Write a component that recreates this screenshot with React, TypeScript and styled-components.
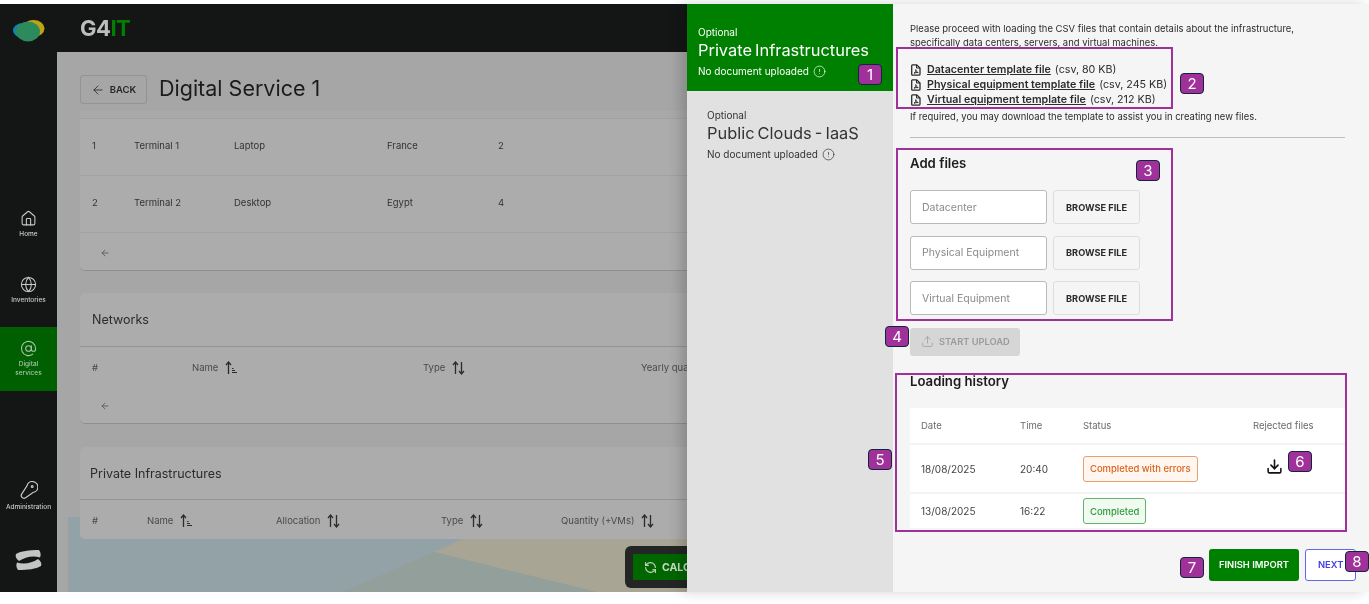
import React from "react"
import styled, { createGlobalStyle } from "styled-components"
import { ArrowLeft, AtSign, CircleAlert, Download, Globe, Home, RefreshCcw, Upload } from "lucide-react"

const uiFont = `"Inter", "Noto Sans", "Liberation Sans", sans-serif`
const purple = "#a0309a"

const GlobalStyle = createGlobalStyle`
    html, body {
        margin: 0;
        padding: 0;
        background: #ffffff;
    }
    * {
        box-sizing: border-box;
    }
`

const terminals = [
    { id: 1, name: "Terminal 1", type: "Laptop", country: "France", quantity: 2 },
    { id: 2, name: "Terminal 2", type: "Desktop", country: "Egypt", quantity: 4 },
]

const uploads = [
    { date: "18/08/2025", time: "20:40", status: "Completed with errors", warn: true },
    { date: "13/08/2025", time: "16:22", status: "Completed", warn: false },
]

const templates = [
    { label: "Datacenter template file", meta: "(csv, 80 KB)" },
    { label: "Physical equipment template file", meta: "(csv, 245 KB)" },
    { label: "Virtual equipment template file", meta: "(csv, 212 KB)" },
]

const badges = [
    { n: 1, x: 858, y: 64 },
    { n: 2, x: 1180, y: 73 },
    { n: 3, x: 1136, y: 160 },
    { n: 4, x: 885, y: 326 },
    { n: 5, x: 868, y: 449 },
    { n: 6, x: 1288, y: 451 },
    { n: 7, x: 1180, y: 557 },
    { n: 8, x: 1345, y: 551 },
]

const boxes = [
    { x: 896, y: 47, w: 277, h: 62 },
    { x: 896, y: 148, w: 277, h: 173 },
    { x: 895, y: 373, w: 452, h: 159 },
]

function SortIcon({ sorted }: { sorted?: boolean }) {
    return (
        <svg width="13" height="14" viewBox="0 0 13 14" fill="none" stroke="#2c2c2c" strokeWidth="1.3">
            <path d="M3.5 13V1.5M1 4l2.5-3L6 4" />
            {sorted ? (
                <path d="M7 7.5h1.5M7 9.5h3M7 11.5h5" strokeWidth="1" />
            ) : (
                <path d="M9.5 1v11.5M7 10l2.5 3L12 10" />
            )}
        </svg>
    )
}

function PdfIcon() {
    return (
        <svg width="10" height="12" viewBox="0 0 10 12" fill="none" stroke="#2b2b2b" strokeWidth="1.3">
            <path d="M1.5.8h4.2L9 4v6a1.2 1.2 0 0 1-1.2 1.2H1.5A.9.9 0 0 1 .7 10.2V1.6a.9.9 0 0 1 .8-.8z" />
            <path d="M5.5 1v3H9M3 9.2c1.4-.8 2-2.2 1.8-3.6.4 1.4 1.2 2.6 2.4 3-1.6-.2-3 0-4.2.6z" strokeWidth="1" />
        </svg>
    )
}

function AppLogo() {
    return (
        <svg width="32" height="22" viewBox="0 0 32 22">
            <ellipse cx="20.5" cy="8.5" rx="11" ry="8.5" fill="#bda514" />
            <ellipse cx="10" cy="10.5" rx="10" ry="7.5" fill="#0f83ad" />
            <ellipse cx="15" cy="11.5" rx="12" ry="10" fill="#2c8a5c" />
        </svg>
    )
}

function AdminKey() {
    return (
        <svg width="19" height="19" viewBox="0 0 19 19" fill="none" stroke="#c9c9c9" strokeWidth="1.2">
            <path d="M8 4.8A5.5 5.5 0 1 1 14 11.5L6.6 16.8Q4.6 17.9 3 16.4 1.5 14.8 2.8 12.8z" />
            <circle cx="13.2" cy="5.4" r="0.9" />
        </svg>
    )
}

function SopraLogo() {
    return (
        <svg width="27" height="20" viewBox="0 0 27 20" fill="#c4c4c4">
            <path d="M1 4C6 1 14 0 24 0c2 3 2 5 1 7.5C18 5 10 7 4 11 1 9 0 6 1 4z" />
            <path d="M26 16c-5 3-13 4-23 4-2-3-2-5-1-7.5C9 15 17 13 23 9c3 2 4 5 3 7z" />
        </svg>
    )
}

export default function App() {
    return (
        <>
            <GlobalStyle />
            <Page>
                <Backdrop>
                    <Sidebar>
                        <LogoSlot>
                            <AppLogo />
                        </LogoSlot>
                        <NavGroup>
                            <NavItem>
                                <Home size={17} strokeWidth={1.5} />
                                <span>Home</span>
                            </NavItem>
                            <NavItem>
                                <Globe size={17} strokeWidth={1.5} />
                                <span>Inventories</span>
                            </NavItem>
                            <NavItem $active>
                                <AtSign size={17} strokeWidth={1.5} />
                                <span>
                                    Digital
                                    <br />
                                    services
                                </span>
                            </NavItem>
                        </NavGroup>
                        <NavSpacer />
                        <NavItem>
                            <AdminKey />
                            <span>Administration</span>
                        </NavItem>
                        <LogoSlot $bottom>
                            <SopraLogo />
                        </LogoSlot>
                    </Sidebar>
                    <Column>
                        <TopBar>
                            <Brand>
                                G4<BrandAccent>IT</BrandAccent>
                            </Brand>
                        </TopBar>
                        <Main>
                            <MapArt viewBox="0 0 619 75" width="619" height="75">
                                <rect width="619" height="75" fill="#93a2a7" />
                                <polygon points="395,22 619,22 619,75 529,75 366,35" fill="#a9a594" />
                                <polygon points="366,35 529,75 275,75" fill="#939f9b" />
                            </MapArt>
                            <TitleRow>
                                <BackButton>
                                    <ArrowLeft size={14} strokeWidth={1.4} />
                                    BACK
                                </BackButton>
                                <Title>Digital Service 1</Title>
                            </TitleRow>
                            <Card>
                                <TopBand />
                                {terminals.map((t) => (
                                    <DataRow key={t.id}>
                                        <span>{t.id}</span>
                                        <span>{t.name}</span>
                                        <span>{t.type}</span>
                                        <span>{t.country}</span>
                                        <span>{t.quantity}</span>
                                    </DataRow>
                                ))}
                                <Pager>
                                    <ArrowLeft size={10} />
                                </Pager>
                            </Card>
                            <Card $gap={22}>
                                <CardTitle>Networks</CardTitle>
                                <HeadRow $columns="100px 231px 218px 1fr">
                                    <span>#</span>
                                    <HeadCell>
                                        Name <SortIcon sorted />
                                    </HeadCell>
                                    <HeadCell>
                                        Type <SortIcon />
                                    </HeadCell>
                                    <HeadCell>Yearly quantity</HeadCell>
                                </HeadRow>
                                <Pager>
                                    <ArrowLeft size={10} />
                                </Pager>
                            </Card>
                            <Card $gap={23} $open>
                                <CardTitle $tight>Private Infrastructures</CardTitle>
                                <HeadRow $columns="55px 129px 165px 120px 1fr">
                                    <span>#</span>
                                    <HeadCell>
                                        Name <SortIcon sorted />
                                    </HeadCell>
                                    <HeadCell>
                                        Allocation <SortIcon />
                                    </HeadCell>
                                    <HeadCell>
                                        Type <SortIcon />
                                    </HeadCell>
                                    <HeadCell>
                                        Quantity (+VMs) <SortIcon />
                                    </HeadCell>
                                </HeadRow>
                            </Card>
                            <CalcDock>
                                <CalcButton>
                                    <RefreshCcw size={13} strokeWidth={2} />
                                    CALCULATE
                                </CalcButton>
                            </CalcDock>
                        </Main>
                    </Column>
                </Backdrop>
                <Drawer>
                    <Steps>
                        <Step $active>
                            <StepHint>Optional</StepHint>
                            <StepTitle>Private Infrastructures</StepTitle>
                            <StepStatus>
                                No document uploaded <CircleAlert size={13} strokeWidth={1.3} />
                            </StepStatus>
                        </Step>
                        <Step>
                            <StepHint>Optional</StepHint>
                            <StepTitle>Public Clouds - IaaS</StepTitle>
                            <StepStatus>
                                No document uploaded <CircleAlert size={13} strokeWidth={1.3} />
                            </StepStatus>
                        </Step>
                    </Steps>
                    <Content>
                        <Body>
                            <Intro>
                                Please proceed with loading the CSV files that contain details about the infrastructure,
                                <br />
                                specifically data centers, servers, and virtual machines.
                            </Intro>
                            <TemplateList>
                                {templates.map((t) => (
                                    <TemplateRow key={t.label}>
                                        <PdfIcon />
                                        <TemplateLink>{t.label}</TemplateLink> {t.meta}
                                    </TemplateRow>
                                ))}
                            </TemplateList>
                            <Note>If required, you may download the template to assist you in creating new files.</Note>
                            <Rule />
                            <SectionTitle>Add files</SectionTitle>
                            <FileRows>
                                {["Datacenter", "Physical Equipment", "Virtual Equipment"].map((name) => (
                                    <FileRow key={name}>
                                        <FileInput>{name}</FileInput>
                                        <BrowseButton>BROWSE FILE</BrowseButton>
                                    </FileRow>
                                ))}
                            </FileRows>
                            <UploadButton>
                                <Upload size={13} strokeWidth={1.3} />
                                START UPLOAD
                            </UploadButton>
                            <SectionTitle>Loading history</SectionTitle>
                            <HistoryTable>
                                <HistoryHead>
                                    <span>Date</span>
                                    <span>Time</span>
                                    <span>Status</span>
                                    <span>Rejected files</span>
                                </HistoryHead>
                                {uploads.map((u) => (
                                    <HistoryRow key={u.date} $tall={u.warn}>
                                        <span>{u.date}</span>
                                        <span>{u.time}</span>
                                        <span>
                                            <StatusChip $warn={u.warn}>{u.status}</StatusChip>
                                        </span>
                                        <RejectedCell>
                                            {u.warn && <Download size={17} strokeWidth={2.2} color="#111" />}
                                        </RejectedCell>
                                    </HistoryRow>
                                ))}
                            </HistoryTable>
                        </Body>
                        <Footer>
                            <FinishButton>FINISH IMPORT</FinishButton>
                            <NextButton>NEXT</NextButton>
                        </Footer>
                    </Content>
                </Drawer>
                {boxes.map((b) => (
                    <Callout key={b.y} $x={b.x} $y={b.y} $w={b.w} $h={b.h} />
                ))}
                {badges.map((b) => (
                    <Badge key={b.n} $x={b.x} $y={b.y}>
                        {b.n}
                    </Badge>
                ))}
            </Page>
        </>
    )
}

const Page = styled.div`
    position: relative;
    display: flex;
    width: 1369px;
    height: 604px;
    padding: 4px 0 12px;
    overflow: hidden;
    font-family: ${uiFont};
    filter: blur(0.3px);
`

const Backdrop = styled.div`
    display: flex;
    flex: 0 0 687px;
    min-width: 0;
`

const Sidebar = styled.nav`
    display: flex;
    flex: 0 0 57px;
    flex-direction: column;
    background: #141515;
    color: #c9c9c9;
`

const LogoSlot = styled.div<{ $bottom?: boolean }>`
    display: flex;
    justify-content: center;
    align-items: center;
    height: ${(p) => (p.$bottom ? "58px" : "54px")};
    margin: ${(p) => (p.$bottom ? "3px 0" : "0")};
`

const NavGroup = styled.div`
    display: flex;
    flex-direction: column;
    gap: 2px;
    margin-top: 134px;
`

const NavSpacer = styled.div`
    flex: 1;
`

const NavItem = styled.div<{ $active?: boolean }>`
    display: flex;
    flex-direction: column;
    align-items: center;
    justify-content: center;
    gap: 3px;
    height: 64px;
    margin-top: ${(p) => (p.$active ? "3px" : "0")};
    font-size: 6.5px;
    line-height: 9px;
    font-weight: 500;
    text-align: center;
    white-space: nowrap;
    background: ${(p) => (p.$active ? "#005f00" : "transparent")};
    color: ${(p) => (p.$active ? "#a9c4a9" : "#c9c9c9")};
`

const Column = styled.div`
    display: flex;
    flex: 1;
    flex-direction: column;
    min-width: 0;
`

const TopBar = styled.header`
    display: flex;
    align-items: center;
    flex: 0 0 48px;
    padding: 0 0 0 23px;
    background: #141515;
`

const Brand = styled.div`
    font-size: 22px;
    font-weight: 700;
    letter-spacing: -0.5px;
    color: #bdbdbd;
`

const BrandAccent = styled.span`
    color: #007f00;
`

const Main = styled.main`
    position: relative;
    flex: 1;
    padding: 23px 0 0 23px;
    overflow: hidden;
    background: #a6a6a6;
`

const MapArt = styled.svg`
    position: absolute;
    left: 11px;
    bottom: 0;
    display: block;
`

const TitleRow = styled.div`
    position: relative;
    display: flex;
    align-items: center;
    gap: 12px;
    height: 29px;
`

const BackButton = styled.div`
    display: flex;
    align-items: center;
    justify-content: center;
    gap: 5px;
    width: 67px;
    height: 29px;
    border: 1px solid #939393;
    border-radius: 3px;
    font-size: 9.5px;
    font-weight: 600;
    color: #262626;
`

const Title = styled.h1`
    margin: 0 0 3px;
    font-size: 21.5px;
    font-weight: 400;
    color: #1b1b1b;
`

const Card = styled.section<{ $gap?: number; $open?: boolean }>`
    position: relative;
    margin-top: ${(p) => p.$gap ?? 7}px;
    background: #acacac;
    border-radius: ${(p) => (p.$gap ? "5px 0 0 5px" : "0 0 0 5px")};
    border-bottom: ${(p) => (p.$open ? "none" : "1px solid #8f8f8f")};
`

const TopBand = styled.div`
    height: 8px;
    border-bottom: 1px solid #a2a2a2;
    background: #a9a9a9;
`

const DataRow = styled.div`
    display: grid;
    grid-template-columns: 42px 100px 153px 111px 1fr;
    align-items: center;
    height: 57px;
    padding-left: 12px;
    padding-bottom: 4px;
    font-size: 9.5px;
    color: #333333;
    border-bottom: 1px solid #a2a2a2;
`

const Pager = styled.div`
    display: flex;
    align-items: center;
    height: 34px;
    margin-top: 3px;
    padding-left: 20px;
    color: #555;
`

const CardTitle = styled.h2<{ $tight?: boolean }>`
    display: flex;
    align-items: center;
    height: ${(p) => (p.$tight ? "53px" : "54px")};
    margin: 0;
    padding-left: ${(p) => (p.$tight ? "10px" : "12px")};
    font-size: 12.5px;
    font-weight: 400;
    color: #2b2b2b;
    border-bottom: 1px solid #949494;
`

const HeadRow = styled.div<{ $columns: string }>`
    display: grid;
    grid-template-columns: ${(p) => p.$columns};
    align-items: center;
    height: 39px;
    padding: 2px 0 0 12px;
    font-size: 9.5px;
    color: #4a4a4a;
    white-space: nowrap;
    overflow: hidden;
`

const HeadCell = styled.span`
    display: flex;
    align-items: center;
    gap: 7px;
`

const CalcDock = styled.div`
    position: absolute;
    left: 568px;
    top: 494px;
    width: 90px;
    height: 42px;
    padding: 8px;
    border-radius: 6px;
    background: #242625;
`

const CalcButton = styled.div`
    display: flex;
    align-items: center;
    gap: 5px;
    height: 26px;
    padding-left: 11px;
    width: 110px;
    background: #006600;
    color: #c8d8c8;
    font-size: 10.5px;
    font-weight: 700;
`

const Drawer = styled.aside`
    position: relative;
    display: flex;
    flex: 1;
    min-width: 0;
    box-shadow: -6px 0 12px rgba(0, 0, 0, 0.18);
`

const Steps = styled.div`
    display: flex;
    flex: 0 0 206px;
    flex-direction: column;
    background: #e1e1e1;
`

const Step = styled.div<{ $active?: boolean }>`
    height: 87px;
    padding: ${(p) => (p.$active ? "21px 0 0 11px" : "17px 0 0 20px")};
    background: ${(p) => (p.$active ? "#008000" : "transparent")};
    color: ${(p) => (p.$active ? "#ffffff" : "#333333")};
`

const StepHint = styled.div`
    font-size: 10px;
    line-height: 14px;
`

const StepTitle = styled.div`
    font-size: 16.4px;
    line-height: 22px;
    word-spacing: -1.5px;
    white-space: nowrap;
`

const StepStatus = styled.div`
    display: flex;
    align-items: center;
    gap: 4px;
    margin-top: 3px;
    font-size: 10px;
    line-height: 14px;
    white-space: nowrap;
`

const Content = styled.div`
    display: flex;
    flex: 1;
    flex-direction: column;
    min-width: 0;
    padding: 18px 13px 0 17px;
    background: #f5f5f5;
    color: #2c2c2c;
`

const Body = styled.div`
    padding-right: 11px;
`

const Intro = styled.p`
    margin: 0;
    font-size: 9.45px;
    line-height: 14px;
    white-space: nowrap;
`

const TemplateList = styled.div`
    margin-top: 12px;
`

const TemplateRow = styled.div`
    display: flex;
    align-items: center;
    height: 15px;
    gap: 4px;
    padding-left: 1px;
    font-size: 10.7px;
    white-space: nowrap;
`

const TemplateLink = styled.span`
    margin-left: 2px;
    font-weight: 600;
    text-decoration: underline;
`

const Note = styled.p`
    margin: 3px 0 0;
    font-size: 9.45px;
    line-height: 14px;
`

const Rule = styled.hr`
    height: 1px;
    margin: 13px 0 0;
    border: 0;
    background: #bcbcbc;
`

const SectionTitle = styled.h3`
    margin: 16px 0 0;
    font-size: 13.2px;
    line-height: 18px;
    font-weight: 600;
    color: #1c1c1c;
`

const FileRows = styled.div`
    display: flex;
    flex-direction: column;
    gap: 11.7px;
    margin-top: 18px;
`

const FileRow = styled.div`
    display: flex;
    gap: 6px;
`

const FileInput = styled.div`
    display: flex;
    align-items: center;
    width: 137px;
    height: 34px;
    padding-left: 11px;
    border: 1px solid #b9b9b9;
    border-radius: 3px;
    background: #ffffff;
    font-size: 10.5px;
    color: #8a8a8a;
`

const BrowseButton = styled.div`
    display: flex;
    align-items: center;
    justify-content: center;
    width: 87px;
    height: 34px;
    border: 1px solid #dedede;
    border-radius: 3px;
    font-size: 9.2px;
    font-weight: 700;
    color: #2b2b2b;
`

const UploadButton = styled.div`
    display: flex;
    align-items: center;
    gap: 5px;
    width: 110px;
    height: 28px;
    margin-top: 13px;
    padding: 0 0 1px 11px;
    border-radius: 3px;
    background: #d6d6d6;
    font-size: 9.3px;
    font-weight: 600;
    color: #9a9a9a;
`

const HistoryTable = styled.div`
    margin-top: 18px;
    background: #ffffff;
    font-size: 10px;
    color: #444444;
`

const HistoryHead = styled.div`
    display: grid;
    grid-template-columns: 99px 63px 170px 1fr;
    align-items: center;
    height: 37px;
    padding-left: 11px;
    font-size: 9.5px;
    color: #6a6a6a;
    border-bottom: 2px solid #f3f3f3;
`

const HistoryRow = styled.div<{ $tall?: boolean }>`
    display: grid;
    grid-template-columns: 99px 63px 170px 1fr;
    align-items: center;
    height: ${(p) => (p.$tall ? "49px" : "34px")};
    padding-left: 11px;
    border-bottom: ${(p) => (p.$tall ? "2px solid #f3f3f3" : "none")};
`

const StatusChip = styled.span<{ $warn?: boolean }>`
    display: inline-flex;
    align-items: center;
    height: 26px;
    padding: 0 6px;
    font-size: 9.45px;
    font-weight: 500;
    white-space: nowrap;
    border-radius: 3px;
    border: 1px solid ${(p) => (p.$warn ? "#e8a070" : "#62b46a")};
    background: ${(p) => (p.$warn ? "#fff6ef" : "#f1faf1")};
    color: ${(p) => (p.$warn ? "#d9641e" : "#2e9a3a")};
`

const RejectedCell = styled.span`
    display: flex;
    padding-left: 13px;
    padding-bottom: 4px;
`

const Footer = styled.div`
    display: flex;
    justify-content: flex-end;
    gap: 6px;
    margin-top: 21px;
`

const FinishButton = styled.div`
    display: flex;
    align-items: center;
    justify-content: center;
    width: 90px;
    height: 32px;
    padding-bottom: 1px;
    border-radius: 3px;
    background: #008000;
    color: #ffffff;
    font-size: 9.4px;
    font-weight: 600;
`

const NextButton = styled.div`
    display: flex;
    align-items: center;
    padding: 0 0 1px 12px;
    width: 51px;
    height: 32px;
    border: 1.5px solid #6464ee;
    border-radius: 3px;
    background: #ffffff;
    color: #3f3fe8;
    font-size: 9.4px;
    font-weight: 600;
`

const Callout = styled.div<{ $x: number; $y: number; $w: number; $h: number }>`
    position: absolute;
    left: ${(p) => p.$x}px;
    top: ${(p) => p.$y}px;
    width: ${(p) => p.$w}px;
    height: ${(p) => p.$h}px;
    border: 2px solid ${purple};
    pointer-events: none;
`

const Badge = styled.div<{ $x: number; $y: number }>`
    position: absolute;
    left: ${(p) => p.$x}px;
    top: ${(p) => p.$y}px;
    display: flex;
    align-items: center;
    justify-content: center;
    width: 24px;
    height: 21px;
    border: 1.5px solid #10263a;
    border-radius: 4px;
    background: ${purple};
    color: #ffffff;
    font-size: 15px;
    line-height: 1;
`
